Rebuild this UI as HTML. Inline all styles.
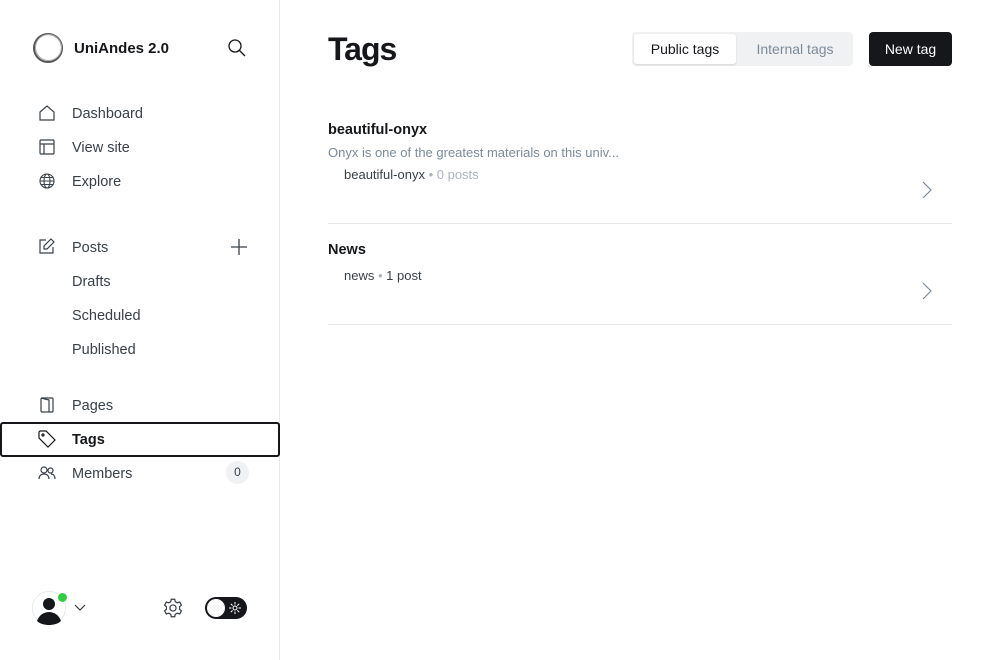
<!DOCTYPE html>
<html><head><meta charset="utf-8"><style>
*{margin:0;padding:0;box-sizing:border-box}
body{width:1000px;height:660px;overflow:hidden;background:#fff;font-family:"Liberation Sans",sans-serif;color:#15171a;position:relative}
.side{position:absolute;left:0;top:0;width:280px;height:660px;border-right:1px solid #e6e9eb}
.brand{position:absolute;left:74px;top:40px;font-weight:bold;font-size:15px}
.nav{position:absolute;left:72px;font-size:14.5px;color:#394047;transform:translateY(-50%);margin-top:1px}
.ic{position:absolute;transform:translate(-50%,-50%)}
.main{position:absolute;left:328px}
</style></head><body>
<div class="side">
<svg class="ic" style="left:48px;top:48px" width="32" height="32" viewBox="0 0 32 32"><circle cx="16" cy="16" r="14" fill="none" stroke="#555" stroke-width="2"/><circle cx="16.5" cy="15.5" r="13" fill="none" stroke="#aaa" stroke-width="1"/></svg>
<div class="brand">UniAndes 2.0</div>
<svg class="ic" style="left:237px;top:48px" width="20" height="20" viewBox="0 0 20 20" fill="none" stroke="#15171a" stroke-width="1.3"><circle cx="8" cy="8" r="6"/><path d="M12.5 12.5l5.5 5.5"/></svg>

<svg class="ic" style="left:47px;top:113px" width="16" height="16" viewBox="0 0 16 16" fill="none" stroke="#394047" stroke-width="1.2"><path d="M1 7L8 1l7 6v8H1z"/></svg>
<div class="nav" style="top:113px">Dashboard</div>
<svg class="ic" style="left:47px;top:147px" width="16" height="16" viewBox="0 0 16 16" fill="none" stroke="#394047" stroke-width="1.2"><rect x="1" y="1" width="14" height="14" rx="1"/><path d="M1 5h14M5 5v10"/></svg>
<div class="nav" style="top:147px">View site</div>
<svg class="ic" style="left:47px;top:181px" width="16" height="16" viewBox="0 0 16 16" fill="none" stroke="#394047" stroke-width="1.1"><circle cx="8" cy="8" r="7"/><ellipse cx="8" cy="8" rx="3" ry="7"/><path d="M1 8h14M2 4.5h12M2 11.5h12"/></svg>
<div class="nav" style="top:181px">Explore</div>

<svg class="ic" style="left:47px;top:246px" width="16" height="16" viewBox="0 0 16 16" fill="none" stroke="#394047" stroke-width="1.2"><path d="M7 2H1v13h13V9"/><path d="M12 1l3 3-7 7H5V8z"/></svg>
<div class="nav" style="top:247px">Posts</div>
<svg class="ic" style="left:239px;top:247px" width="18" height="18" viewBox="0 0 18 18" stroke="#394047" stroke-width="1.3"><path d="M9 1v16M1 9h16"/></svg>
<div class="nav" style="top:281px">Drafts</div>
<div class="nav" style="top:315px">Scheduled</div>
<div class="nav" style="top:349px">Published</div>

<svg class="ic" style="left:47px;top:405px" width="16" height="16" viewBox="0 0 16 16" fill="none" stroke="#394047" stroke-width="1.2"><rect x="2" y="1" width="12" height="14" rx="1"/><path d="M2 1l8 2v12"/></svg>
<div class="nav" style="top:405px">Pages</div>
<div style="position:absolute;left:0;top:422px;width:280px;height:35px;border:2px solid #15171a;border-radius:3px"></div>
<svg class="ic" style="left:47px;top:439px" width="18" height="18" viewBox="0 0 18 18" fill="none" stroke="#15171a" stroke-width="1.2"><path d="M1 2v6l9 9 7-7-9-9H2z"/><circle cx="5" cy="5" r="1"/></svg>
<div class="nav" style="top:439px;font-weight:bold;color:#15171a">Tags</div>
<svg class="ic" style="left:47px;top:473px" width="18" height="16" viewBox="0 0 18 16" fill="none" stroke="#394047" stroke-width="1.2"><circle cx="6" cy="5" r="3"/><path d="M1 14c0-3 2-5 5-5s5 2 5 5"/><circle cx="12.5" cy="5.5" r="2.5"/><path d="M13 9c2.5 0 4 2 4 5"/></svg>
<div class="nav" style="top:473px">Members</div>
<div style="position:absolute;left:226px;top:461px;width:23px;height:23px;border-radius:50%;background:#eff1f3;font-size:12px;color:#394047;text-align:center;line-height:23px">0</div>

<svg class="ic" style="left:49px;top:608px" width="34" height="34" viewBox="0 0 34 34"><circle cx="17" cy="17" r="16.5" fill="#fff" stroke="#e6e9eb"/><circle cx="17" cy="13" r="6" fill="#15171a"/><path d="M5 30c2-6 7-9 12-9s10 3 12 9c-3 3-8 4-12 4s-9-1-12-4z" fill="#15171a"/></svg>
<div style="position:absolute;left:57px;top:592px;width:11px;height:11px;border-radius:50%;background:#30cf43;border:1px solid #fff"></div>
<svg class="ic" style="left:80px;top:608px" width="12" height="8" viewBox="0 0 12 8" fill="none" stroke="#394047" stroke-width="1.2"><path d="M1 1l5 5 5-5"/></svg>
<svg class="ic" style="left:173px;top:608px" width="21" height="21" viewBox="0 0 24 24" fill="none" stroke="#394047" stroke-width="1.4"><circle cx="12" cy="12" r="3.5"/><path d="M10 2h4l.6 2.8 2.3 1.3 2.7-.9 2 3.5-2.1 1.9v2.8l2.1 1.9-2 3.5-2.7-.9-2.3 1.3L14 22h-4l-.6-2.8-2.3-1.3-2.7.9-2-3.5 2.1-1.9V10.6L2.4 8.7l2-3.5 2.7.9 2.3-1.3z"/></svg>
<div style="position:absolute;left:205px;top:597px;width:42px;height:22px;border-radius:11px;background:#15171a"></div>
<div style="position:absolute;left:207px;top:599px;width:18px;height:18px;border-radius:50%;background:#fff"></div>
<svg class="ic" style="left:235px;top:608px" width="12" height="12" viewBox="0 0 12 12" stroke="#fff" stroke-width="1"><circle cx="6" cy="6" r="2" fill="none"/><path d="M6 0v2.5M6 9.5V12M0 6h2.5M9.5 6H12M1.8 1.8l1.8 1.8M8.4 8.4l1.8 1.8M1.8 10.2l1.8-1.8M8.4 3.6l1.8-1.8"/></svg>
</div>

<div class="main" style="top:31px;font-size:32px;font-weight:bold;letter-spacing:-1px">Tags</div>
<div style="position:absolute;left:632px;top:32px;width:221px;height:34px;background:#eff1f3;border-radius:4px"></div>
<div style="position:absolute;left:634px;top:34px;width:102px;height:30px;background:#fff;border-radius:3px;box-shadow:0 1px 2px rgba(0,0,0,.12);font-size:14px;text-align:center;line-height:30px">Public tags</div>
<div style="position:absolute;left:740px;top:34px;width:110px;height:30px;font-size:14px;color:#7c8b9a;text-align:center;line-height:30px">Internal tags</div>
<div style="position:absolute;left:869px;top:32px;width:83px;height:34px;background:#15171a;color:#fff;border-radius:4px;font-size:14px;text-align:center;line-height:34px">New tag</div>

<div class="main" style="top:122px;font-size:14.5px;font-weight:bold">beautiful-onyx</div>
<div class="main" style="top:145px;font-size:13px;color:#7c8b9a">Onyx is one of the greatest materials on this univ...</div>
<div class="main" style="left:344px;top:167px;font-size:13px;color:#394047">beautiful-onyx <span style="color:#abb4be">•</span> <span style="color:#abb4be">0 posts</span></div>
<svg class="ic" style="left:927px;top:190px" width="10" height="18" viewBox="0 0 10 18" fill="none" stroke="#7c8b9a" stroke-width="1.2"><path d="M1 1l8 8-8 8"/></svg>
<div style="position:absolute;left:328px;top:223px;width:624px;height:1px;background:#e6e9eb"></div>
<div class="main" style="top:242px;font-size:14.5px;font-weight:bold">News</div>
<div class="main" style="left:344px;top:268px;font-size:13px;color:#394047">news <span style="color:#abb4be">•</span> 1 post</div>
<svg class="ic" style="left:927px;top:291px" width="10" height="18" viewBox="0 0 10 18" fill="none" stroke="#7c8b9a" stroke-width="1.2"><path d="M1 1l8 8-8 8"/></svg>
<div style="position:absolute;left:328px;top:324px;width:624px;height:1px;background:#e6e9eb"></div>
</body></html>
